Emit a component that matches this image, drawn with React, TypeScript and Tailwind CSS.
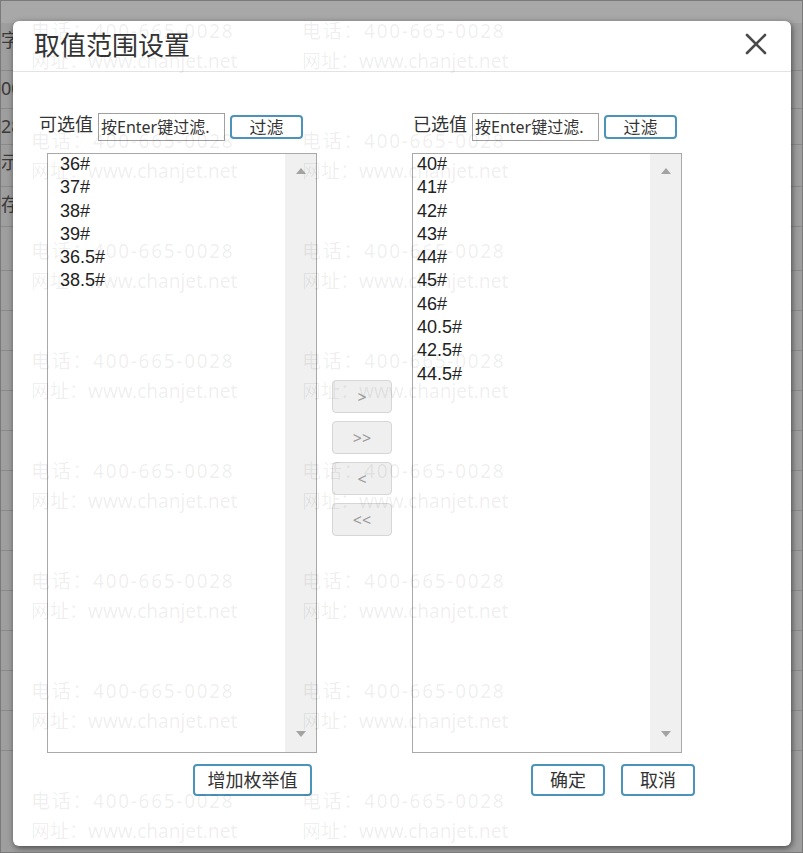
import React from "react";

const leftItems = ["36#", "37#", "38#", "39#", "36.5#", "38.5#"];
const rightItems = ["40#", "41#", "42#", "43#", "44#", "45#", "46#", "40.5#", "42.5#", "44.5#"];

const uiFont = { fontFamily: '"Noto Sans", "Noto Sans CJK SC", sans-serif' };

function BlueButton({ label, width }: { label: string; width: string }) {
  return (
    <button
      className={`${width} h-[32px] rounded-[4px] border-2 border-[#4b93b8] bg-white text-[18px] leading-none text-[#333]`}
    >
      {label}
    </button>
  );
}

function ListBox({ items, indent }: { items: string[]; indent: string }) {
  return (
    <div className="flex h-[600px] w-[270px] border border-[#a9a9a9] bg-white">
      <div
        className={`flex-1 ${indent} -mt-[1px] text-[18px] leading-[23.3px] text-[#222]`}
        style={{ fontFamily: '"Liberation Sans", Arial, sans-serif' }}
      >
        {items.map((it) => (
          <div key={it}>{it}</div>
        ))}
      </div>
      {/* fake scrollbar */}
      <div className="flex w-[31px] flex-col items-center justify-between bg-[#f0f0f0] pb-[15px] pt-[14px]">
        <svg width="10" height="6" viewBox="0 0 10 6">
          <path d="M0 6 L5 0 L10 6 Z" fill="#a3a3a3" />
        </svg>
        <svg width="10" height="6" viewBox="0 0 10 6">
          <path d="M0 0 L5 6 L10 0 Z" fill="#a3a3a3" />
        </svg>
      </div>
    </div>
  );
}

function FilterRow({ label }: { label: string }) {
  return (
    <div className="flex h-[28px] items-center">
      <span className="-mt-[6px] w-[55px] text-[18px] leading-none text-[#333]">{label}</span>
      <div className="ml-[4px] h-[28px] w-[127px] overflow-hidden whitespace-nowrap border border-[#a0a0a0] bg-white pl-[2px] text-[16px] leading-[26px] text-[#333]">
        按Enter键过滤.
      </div>
      <button className="ml-[5px] h-[24px] w-[73px] rounded-[4px] border-2 border-[#4b93b8] bg-white text-[17px] leading-none text-[#333]">
        过滤
      </button>
    </div>
  );
}

function MoveButton({ label }: { label: string }) {
  return (
    <button className="h-[33px] w-[60px] rounded-[4px] border border-[#d6d6d6] bg-[#efefef] text-[16px] text-[#9a9a9a]">
      {label}
    </button>
  );
}

export default function App() {
  const bgRows = [48, 38, 36, 42, 40, 44, 40, 40, 40, 40, 40, 40, 40, 40, 40, 40, 40, 40];
  const bgTexts = ["字", "00", "28", "示", "存"];

  return (
    <div className="relative h-[853px] w-[803px] overflow-hidden border border-[#7a7a7a] bg-[#9e9e9e]" style={uiFont}>
      {/* page behind the modal (dimmed) */}
      <div className="flex h-full flex-col">
        <div className="h-[22px] bg-[#a8a8a8]" />
        {bgRows.map((h, i) => (
          <div key={i} className="flex border-b border-[#8a8a8a]" style={{ height: h }}>
            <span className="w-[12px] overflow-hidden whitespace-nowrap pt-[8px] text-[18px] leading-none text-[#3a3a3a]">
              {bgTexts[i] ?? ""}
            </span>
          </div>
        ))}
      </div>

      {/* modal dialog */}
      <div className="absolute left-[12px] top-[20px] flex h-[825px] w-[778px] flex-col rounded-[6px] bg-white shadow-[1px_2px_6px_rgba(0,0,0,0.55)]">
        <div className="flex h-[51px] items-center justify-between border-b border-[#e3e3e3] pl-[21px] pr-[24px]">
          <h1 className="-mt-[2px] text-[26px] font-normal text-[#333]">取值范围设置</h1>
          <svg width="22" height="22" viewBox="0 0 22 22" className="mb-[4px]">
            <path d="M2 2 L20 20 M20 2 L2 20" stroke="#4a4a4a" strokeWidth="2.6" strokeLinecap="round" />
          </svg>
        </div>

        <div className="flex pl-[26px] pt-[41px]">
          {/* left */}
          <div className="flex w-[278px] flex-col">
            <FilterRow label="可选值" />
            <div className="ml-[8px] mt-[12px]">
              <ListBox items={leftItems} indent="pl-[12px]" />
            </div>
            <div className="mr-[5px] mt-[11px] flex justify-end">
              <BlueButton label="增加枚举值" width="w-[119px]" />
            </div>
          </div>

          {/* middle */}
          <div className="ml-[15px] flex flex-col gap-[8px] pt-[267px]">
            <MoveButton label=">" />
            <MoveButton label=">>" />
            <MoveButton label="<" />
            <MoveButton label="<<" />
          </div>

          {/* right */}
          <div className="ml-[21px] flex w-[282px] flex-col">
            <FilterRow label="已选值" />
            <div className="ml-[-1px] mt-[12px]">
              <ListBox items={rightItems} indent="pl-[4px]" />
            </div>
            <div className="mt-[11px] flex justify-end gap-[16px]">
              <BlueButton label="确定" width="w-[74px]" />
              <BlueButton label="取消" width="w-[74px]" />
            </div>
          </div>
        </div>
      </div>

      {/* watermark overlay */}
      <div className="pointer-events-none absolute inset-0 flex flex-wrap content-start pl-[30px] pt-[15px]">
        {Array.from({ length: 24 }, (_, i) => (
          <div key={i} className="h-[110px] w-[271px] whitespace-nowrap text-[19px] leading-[30px] text-black/[0.075]">
            <div className="tracking-[1.7px]">电话：400-665-0028</div>
            <div>网址：www.chanjet.net</div>
          </div>
        ))}
      </div>
    </div>
  );
}
